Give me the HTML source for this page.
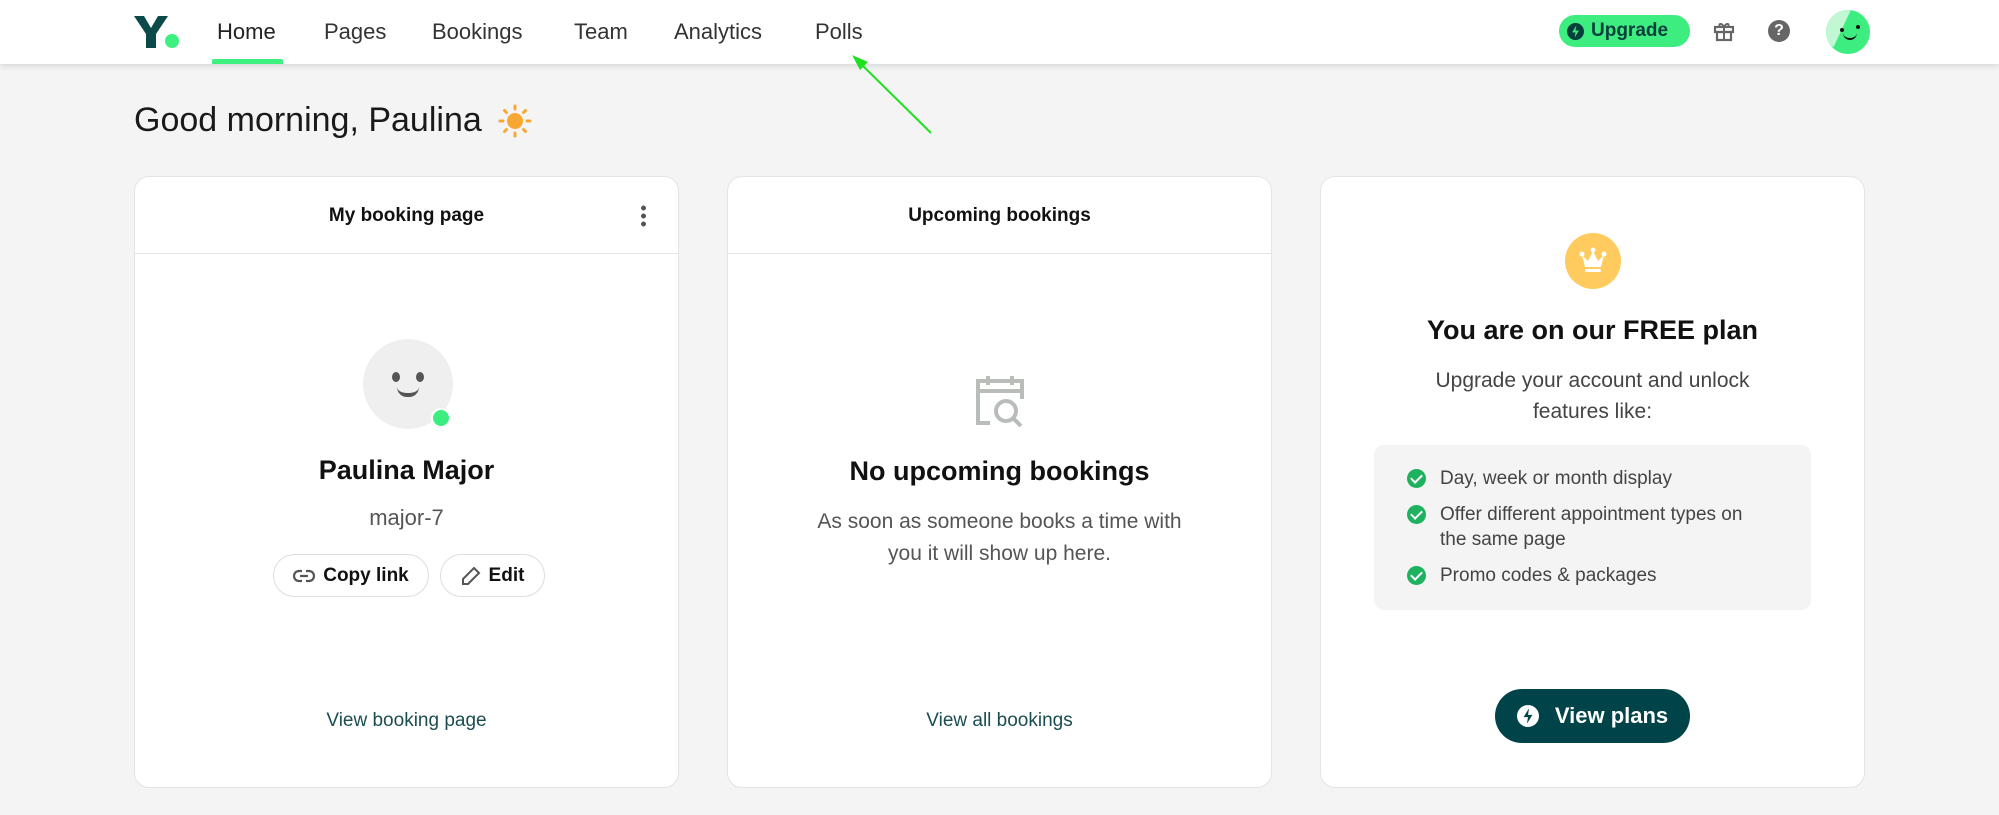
<!DOCTYPE html>
<html><head><meta charset="utf-8"><style>
*{box-sizing:border-box;margin:0;padding:0}
body{width:1999px;height:815px;background:#f4f4f4;font-family:"Liberation Sans",sans-serif;position:relative;overflow:hidden;color:#111}
.nav{position:absolute;left:0;top:0;width:1999px;height:64px;background:#fff;box-shadow:0 2px 6px rgba(0,0,0,.12)}
.ni{position:absolute;top:19px;font-size:22px;color:#333}
.abs{position:absolute}
.card{position:absolute;top:176px;width:545px;height:612px;background:#fff;border:1px solid #e4e4e4;border-radius:15px}
.hdr{height:77px;border-bottom:1px solid #e4e4e4;text-align:center;line-height:77px;font-size:19px;font-weight:bold}
.c{position:absolute;left:0;width:100%;text-align:center}
.btn{position:absolute;top:377px;height:43px;border:1px solid #ddd;border-radius:22px;font-size:19px;font-weight:bold;display:flex;align-items:center;justify-content:center;gap:8px}
.link{color:#1b4d50;font-size:19px}
.li{position:absolute;left:33px;font-size:19px;color:#444;display:flex;gap:14px;line-height:25px}
.ck{width:19px;height:19px;border-radius:50%;background:#1eb25f;flex:none;margin-top:3px;position:relative}
.ck:after{content:"";position:absolute;left:6px;top:3px;width:5px;height:9px;border:solid #fff;border-width:0 2.5px 2.5px 0;transform:rotate(45deg)}
</style></head><body>
<div class="nav">
  <svg class="abs" style="left:134px;top:16px" width="46" height="32" viewBox="0 0 46 32"><path d="M0 0h10l7 12 7-12h10L22 18v14h-10V18z" fill="#0b4a48"/><circle cx="38" cy="25" r="7" fill="#3df07f"/></svg>
  <div class="ni" style="left:217px;color:#222">Home</div>
  <div class="ni" style="left:324px">Pages</div>
  <div class="ni" style="left:432px">Bookings</div>
  <div class="ni" style="left:574px">Team</div>
  <div class="ni" style="left:674px">Analytics</div>
  <div class="ni" style="left:815px">Polls</div>
  <div class="abs" style="left:212px;top:59px;width:71px;height:5px;background:#3df07f;border-radius:2px 2px 0 0"></div>
  <div class="abs" style="left:1559px;top:15px;width:131px;height:32px;border-radius:16px;background:#3ded80;display:flex;align-items:center;padding-left:8px;gap:7px;font-size:19px;font-weight:bold;color:#053f3c">
    <svg width="17" height="17" viewBox="0 0 20 20"><circle cx="10" cy="10" r="10" fill="#053f3c"/><path d="M11 3 6 11h4l-1 6 5-8h-4z" fill="#3ded80"/></svg>Upgrade</div>
  <svg class="abs" style="left:1713px;top:20px" width="22" height="22" viewBox="0 0 22 22"><rect x="2" y="7" width="18" height="5" fill="none" stroke="#666" stroke-width="2.2"/><rect x="4" y="12" width="14" height="8" fill="none" stroke="#666" stroke-width="2.2"/><path d="M11 7v13M11 7C8 2 5 4 7 7M11 7c3-5 6-3 4 0" fill="none" stroke="#666" stroke-width="2"/></svg>
  <div class="abs" style="left:1768px;top:20px;width:22px;height:22px;border-radius:50%;background:#666;color:#fff;font-weight:bold;font-size:16px;text-align:center;line-height:22px">?</div>
  <div class="abs" style="left:1826px;top:10px;width:44px;height:44px;border-radius:50%;background:#3ded80;overflow:hidden">
    <div class="abs" style="left:-6px;top:-10px;width:24px;height:44px;background:#c2f7d3;transform:rotate(25deg)"></div>
    <div class="abs" style="left:14px;top:18px;width:4px;height:4px;border-radius:50%;background:#111"></div>
    <div class="abs" style="left:30px;top:15px;width:4px;height:4px;border-radius:50%;background:#111"></div>
    <div class="abs" style="left:17px;top:22px;width:14px;height:8px;border-bottom:2.5px solid #111;border-radius:0 0 8px 8px"></div>
  </div>
</div>
<svg class="abs" style="left:0;top:0" width="1000" height="150"><line x1="931" y1="133" x2="860" y2="63" stroke="#1fe01f" stroke-width="2"/><path d="M852 55 868 62 860 70z" fill="#1fe01f"/></svg>
<div class="abs" style="left:134px;top:101px;font-size:34px;color:#1a1a1a">Good morning, Paulina</div>
<svg class="abs" style="left:498px;top:104px" width="34" height="34" viewBox="0 0 34 34"><circle cx="17" cy="17" r="8" fill="#f8a832"/><g stroke="#f8a832" stroke-width="3" stroke-linecap="round"><path d="M17 2v3M17 29v3M2 17h3M29 17h3M6.5 6.5l2 2M25.5 25.5l2 2M6.5 27.5l2-2M25.5 8.5l2-2"/></g></svg>

<div class="card" style="left:134px">
  <div class="hdr">My booking page</div>
  <div class="abs" style="right:32px;top:27px;width:5px;height:23px;background:radial-gradient(circle,#555 2.3px,transparent 2.6px) 0 0/5px 8px"></div>
  <div class="abs" style="left:228px;top:162px;width:90px;height:90px;border-radius:50%;background:#efefef"></div>
  <div class="abs" style="left:257px;top:195px;width:8px;height:10px;border-radius:50%;background:#555"></div>
  <div class="abs" style="left:281px;top:195px;width:8px;height:10px;border-radius:50%;background:#555"></div>
  <div class="abs" style="left:262px;top:210px;width:22px;height:10px;border-bottom:4px solid #555;border-radius:0 0 11px 11px"></div>
  <div class="abs" style="left:296px;top:231px;width:20px;height:20px;border-radius:50%;background:#3ded80;border:2px solid #fff"></div>
  <div class="c" style="top:278px;font-size:27px;font-weight:bold">Paulina Major</div>
  <div class="c" style="top:328px;font-size:22px;color:#555">major-7</div>
  <div class="btn" style="left:138px;width:156px"><svg width="22" height="14" viewBox="0 0 22 14"><path d="M9 2H6a5 5 0 0 0 0 10h3M13 2h3a5 5 0 0 1 0 10h-3M7 7h8" fill="none" stroke="#555" stroke-width="2.2"/></svg>Copy link</div>
  <div class="btn" style="left:305px;width:105px"><svg width="20" height="20" viewBox="0 0 20 20"><path d="M13 2l5 5L7 18H2v-5z" fill="none" stroke="#555" stroke-width="2"/></svg>Edit</div>
  <div class="c link" style="top:533px">View booking page</div>
</div>

<div class="card" style="left:727px">
  <div class="hdr">Upcoming bookings</div>
  <svg class="abs" style="left:244px;top:196px" width="58" height="58" viewBox="0 0 58 58"><path d="M18 50H6V8h44v18M6 18h44M16 3v9M40 3v9" fill="none" stroke="#b8bdb9" stroke-width="4"/><circle cx="34" cy="38" r="10" fill="none" stroke="#b8bdb9" stroke-width="4"/><path d="M41 45l8 8" stroke="#b8bdb9" stroke-width="4"/></svg>
  <div class="c" style="top:279px;font-size:27px;font-weight:bold">No upcoming bookings</div>
  <div class="c" style="top:329px;font-size:21px;color:#555;line-height:32px">As soon as someone books a time with<br>you it will show up here.</div>
  <div class="c link" style="top:533px">View all bookings</div>
</div>

<div class="card" style="left:1320px">
  <div class="abs" style="left:244px;top:56px;width:56px;height:56px;border-radius:50%;background:#ffcb5f"></div>
  <svg class="abs" style="left:256px;top:68px" width="32" height="32" viewBox="0 0 32 32"><circle cx="5" cy="9" r="2.5" fill="#fff"/><circle cx="16" cy="5" r="2.5" fill="#fff"/><circle cx="27" cy="9" r="2.5" fill="#fff"/><path d="M5 10 8 22h16l3-12-6 6-5-10-5 10z" fill="#fff"/><rect x="8" y="24" width="16" height="3" rx="1.5" fill="#fff"/></svg>
  <div class="c" style="top:138px;font-size:27px;font-weight:bold">You are on our FREE plan</div>
  <div class="c" style="top:188px;font-size:21px;color:#444;line-height:31px">Upgrade your account and unlock<br>features like:</div>
  <div class="abs" style="left:53px;top:268px;width:437px;height:165px;background:#f4f4f4;border-radius:10px">
    <div class="li" style="top:21px"><div class="ck"></div>Day, week or month display</div>
    <div class="li" style="top:57px"><div class="ck"></div>Offer different appointment types on<br>the same page</div>
    <div class="li" style="top:118px"><div class="ck"></div>Promo codes &amp; packages</div>
  </div>
  <div class="abs" style="left:174px;top:512px;width:195px;height:54px;border-radius:27px;background:#004449;color:#fff;font-size:22px;font-weight:bold;display:flex;align-items:center;justify-content:center;gap:16px">
    <svg width="22" height="22" viewBox="0 0 20 20"><circle cx="10" cy="10" r="10" fill="#fff"/><path d="M11 3 6 11h4l-1 6 5-8h-4z" fill="#004449"/></svg>View plans</div>
</div>
</body></html>
